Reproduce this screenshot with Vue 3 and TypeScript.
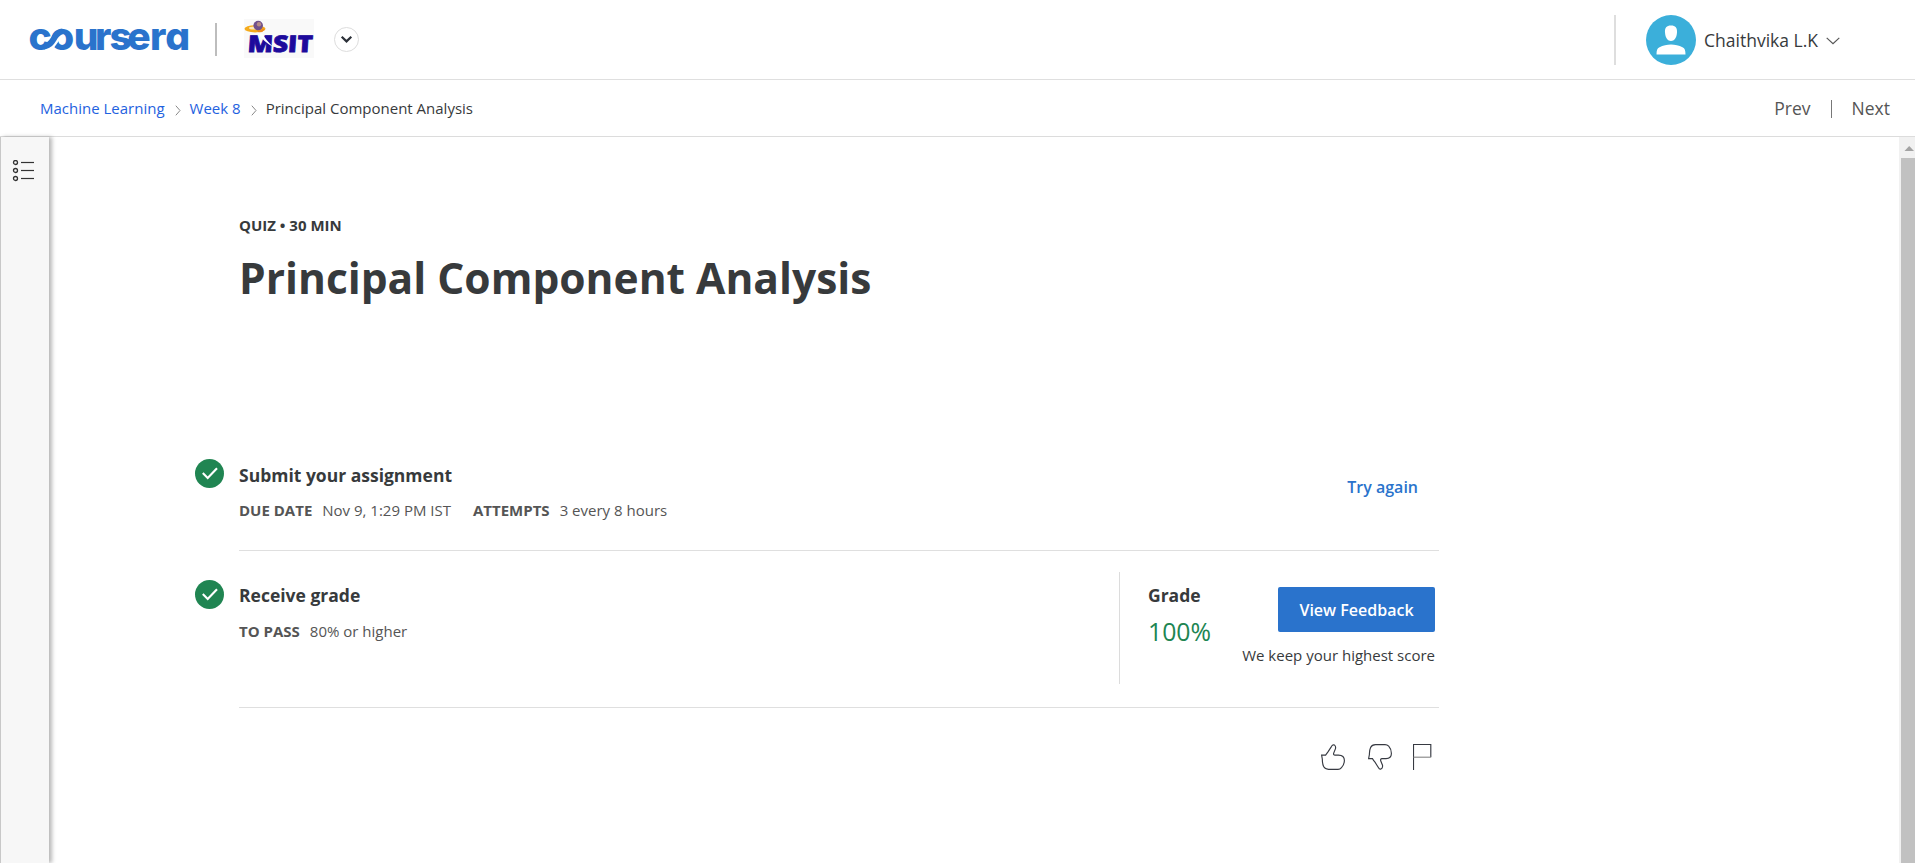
<script setup lang="ts">
interface Fact { label: string; value: string }
interface Crumb { text: string; link: boolean }

const crumbs: Crumb[] = [
  { text: 'Machine Learning', link: true },
  { text: 'Week 8', link: true },
  { text: 'Principal Component Analysis', link: false },
]
const submitFacts: Fact[] = [
  { label: 'DUE DATE', value: 'Nov 9, 1:29 PM IST' },
  { label: 'ATTEMPTS', value: '3 every 8 hours' },
]
const gradeFacts: Fact[] = [{ label: 'TO PASS', value: '80% or higher' }]
</script>

<template>
  <div class="page">
    <header class="header">
      <svg class="brand" width="162" height="30" viewBox="29 24 162 30">
        <text y="49.6" x="28.6 50 73.8 95 109.6 127.3 150 165.2">coursera</text>
        <path d="M50.2 46.8 L58.6 35.4" stroke="#fff" stroke-width="7" fill="none" />
        <path d="M44 46.4 C50 46 52 41.5 54.8 37.2 C57 33.8 59 31.6 62.5 31.4" stroke="#2a73cc" stroke-width="6" fill="none" />
      </svg>
      <span class="brand-line"></span>
      <svg class="partner" width="70" height="39" viewBox="0 0 70 39">
        <rect width="70" height="39" fill="#f9f9f9" />
        <ellipse cx="11" cy="9.8" rx="10.5" ry="3.6" fill="#f5ab1c" />
        <ellipse cx="10" cy="9" rx="5" ry="1.5" fill="#fde9b8" />
        <circle cx="14.2" cy="6.6" r="4.8" fill="#70508c" />
        <circle cx="15" cy="5.2" r="2.2" fill="#b58a86" />
        <path d="M14 12 q4 1 6 -2" stroke="#f08a1c" stroke-width="2" fill="none" />
        <text transform="translate(3.2 33) skewX(-4)" textLength="65" lengthAdjust="spacingAndGlyphs">MSIT</text>
        <path d="M14 14.5 Q19 22 29 28 Q22 21 18 14.5z" fill="#fff" />
      </svg>
      <button class="switcher" aria-label="Switch program">
        <svg width="13" height="9" viewBox="0 0 13 9"><path d="M1.7 1.8 L6.5 6.4 L11.3 1.8" /></svg>
      </button>
      <div class="account">
        <svg class="avatar" width="50" height="50" viewBox="0 0 50 50">
          <circle cx="25" cy="25" r="25" fill="#3bafda" />
          <path d="M25 10.5 C29.5 10.5 31.4 13 31 17.5 C30.6 23 28.3 26 25 26 C21.7 26 19.4 23 19 17.5 C18.6 13 20.5 10.5 25 10.5z" fill="#fff" />
          <path d="M10.5 39.5 C10.6 35.5 11 33.2 13.5 32.2 C17 30.7 21 29.6 25 29.6 S33 30.7 36.5 32.2 C39 33.2 39.4 35.5 39.5 39.5z" fill="#fff" />
        </svg>
        <span class="name">Chaithvika L.K</span>
        <svg class="caret" width="14" height="8" viewBox="0 0 14 8"><path d="M.7 .9 L7 6.7 L13.3 .9" /></svg>
      </div>
    </header>

    <nav class="bar">
      <template v-for="(c, i) in crumbs" :key="c.text">
        <svg v-if="i > 0" class="sep" width="6" height="11" viewBox="0 0 6 11"><path d="M.8 .7 L5 5.5 L.8 10.3" /></svg>
        <a v-if="c.link" class="crumb link">{{ c.text }}</a>
        <span v-else class="crumb">{{ c.text }}</span>
      </template>
      <div class="pager"><span>Prev</span><i></i><span>Next</span></div>
    </nav>

    <div class="body">
      <aside class="rail">
        <svg width="23" height="22" viewBox="0 0 23 22">
          <g v-for="y in [3, 11, 19]" :key="y">
            <circle cx="3.5" :cy="y - 0.5" r="2" />
            <path :d="`M9 ${y - 0.5} H22`" />
          </g>
        </svg>
      </aside>

      <main class="content">
        <p class="kind">QUIZ • 30 MIN</p>
        <h1>Principal Component Analysis</h1>

        <section class="step submit">
          <svg class="tick" width="29" height="29" viewBox="0 0 29 29"><circle cx="14.5" cy="14.5" r="14.5" /><path d="M7.8 14 L12.7 19 L22 9.2" /></svg>
          <div class="info">
            <h2>Submit your assignment</h2>
            <p class="facts"><span v-for="f in submitFacts" :key="f.label"><b>{{ f.label }}</b>{{ f.value }}</span></p>
          </div>
          <a class="again">Try again</a>
        </section>

        <section class="step receive">
          <svg class="tick" width="29" height="29" viewBox="0 0 29 29"><circle cx="14.5" cy="14.5" r="14.5" /><path d="M7.8 14 L12.7 19 L22 9.2" /></svg>
          <div class="info">
            <h2>Receive grade</h2>
            <p class="facts"><span v-for="f in gradeFacts" :key="f.label"><b>{{ f.label }}</b>{{ f.value }}</span></p>
          </div>
          <div class="grade">
            <div class="score"><h2>Grade</h2><strong>100%</strong></div>
            <div class="feedback"><button>View Feedback</button><p>We keep your highest score</p></div>
          </div>
        </section>

        <div class="reactions">
          <svg width="24" height="26" viewBox="0 0 24 26"><path d="M.6 11.1 H4.6 Q5.6 9.6 7 7.9 L10.4 2.6 Q11.7 .1 13.5 1.1 Q15 2.2 14.5 4.6 L12.6 9.3 Q12.3 11 14 11.1 H17.5 Q23.4 11.3 23.4 16.5 Q23.2 21 20.5 23.6 Q19 25.4 17 25.4 H7.5 Q4 25.2 2.6 22.6 Q1.4 20 1.3 15 L.6 11.1z" /></svg>
          <svg width="24" height="26" viewBox="0 0 24 26"><path d="M.6 14.6 H4.4 Q5.4 16.6 7 18.2 L10.2 23.2 Q11.5 25.7 13 25 Q15 24 14.5 21.2 L12.7 16.8 Q12.3 14.6 14 14.6 H18 Q23.4 14.4 23.4 9.5 Q23.3 5 20.7 2.2 Q19.2 .6 17 .6 H7.5 Q4 .7 2.6 3.4 Q1.3 6 1.4 10.5 L.6 14.6z" /></svg>
          <svg width="19" height="26" viewBox="0 0 19 26"><path d="M.5 26 V.5 H17.8 V13.2" /><path class="thin" d="M.5 13.2 H17.8" /></svg>
        </div>
      </main>

      <div class="scroll"><svg width="16" height="21" viewBox="0 0 16 21"><path d="M5.5 14 L10.2 9 L15 14z" /></svg><i></i></div>
    </div>
  </div>
</template>

<style scoped>
.page { width: 1915px; height: 863px; display: flex; flex-direction: column; overflow: hidden; background: #fff; color: #373a3c; font: 15px/24px "Open Sans", sans-serif; }
h1, h2, p { margin: 0; }
button { font-family: inherit; padding: 0; border: 0; }
svg { display: block; flex: none; }
.header { box-sizing: border-box; height: 80px; border-bottom: 1px solid #dfdfdf; display: flex; align-items: center; flex: none; padding-left: 29px; }
.brand text { font: 800 39px Inter, sans-serif; font-feature-settings: "cv11"; fill: #2a73cc; }
.brand { margin-top: -1px; overflow: visible; }
.brand-line { width: 2px; height: 33px; background: #bdbdbd; margin-left: 24px; }
.partner { margin: -2px 0 0 27px; }
.partner text { font: 800 23px "Open Sans", sans-serif; fill: #1d0a9c; stroke: #1d0a9c; stroke-width: .8; }
.switcher { width: 25px; height: 25px; border: 1px solid #ddd; border-radius: 50%; background: #fff; display: grid; place-items: center; margin-left: 20px; }
.switcher path { fill: none; stroke: #2b3038; stroke-width: 2.2; }
.account { margin: 1px 75px 0 auto; padding-left: 30px; height: 50px; border-left: 2px solid #dedede; display: flex; align-items: center; }
.name { font-size: 17.5px; margin: -1px 0 0 8px; }
.caret { margin: 2px 0 0 8px; }
.caret path { fill: none; stroke: #555; stroke-width: 1.2; }
.bar { box-sizing: border-box; height: 57px; border-bottom: 1px solid #dcdcdc; display: flex; align-items: center; flex: none; padding: 0 25px 0 40px; }
.crumb { margin-top: -1px; }
.link { color: #1f62e0; }
.sep { margin: 5px 9px 0 10px; }
.sep path { fill: none; stroke: #888; stroke-width: 1; }
.pager { margin-left: auto; display: flex; align-items: center; font-size: 17.5px; color: #555; margin-top: -1px; }
.pager i { width: 1px; height: 18px; background: #777; margin: 2px 20px 0 20px; }
.body { flex: 1; display: flex; min-height: 0; }
.rail { box-sizing: border-box; width: 49px; border-left: 1px solid #c8c8c8; background: #f7f7f7; box-shadow: 3px 0 4px rgba(0, 0, 0, .28); padding: 23px 0 0 11px; flex: none; }
.rail circle { fill: none; stroke: #333; stroke-width: 1.3; }
.rail path { stroke: #333; stroke-width: 1.2; }
.content { width: 1200px; margin-left: 190px; padding-top: 76px; }
.kind { font-weight: 700; font-size: 15px; }
h1 { font-size: 42.5px; line-height: 58px; font-weight: 700; margin-top: 12px; }
.step { display: flex; box-sizing: border-box; border-bottom: 1px solid #dfdfdf; }
.tick { margin: 0 15.5px 0 -44.5px; }
.tick circle { fill: #208552; }
.tick path { fill: none; stroke: #fff; stroke-width: 2.1; }
h2 { font-size: 17.5px; line-height: 24px; font-weight: 700; }
.info { flex: 1; }
.facts { display: flex; gap: 22px; color: #555; margin-top: 11px; }
.facts b { font-weight: 700; margin-right: 10px; }
.submit { height: 99px; margin-top: 145px; padding-top: 7px; }
.submit h2 { margin-top: 4px; }
.again { color: #2a73cc; font-weight: 600; font-size: 16px; margin: 16px 21px 0 0; }
.receive { height: 157px; padding-top: 21px; }
.receive .tick { margin-top: 8px; }
.receive h2 { margin-top: 11px; }
.receive .facts { margin-top: 12px; }
.grade { border-left: 1px solid #dcdcdc; height: 112px; width: 316px; padding-left: 28px; margin-right: 4px; box-sizing: border-box; display: flex; justify-content: space-between; }
.score strong { display: block; font-weight: 400; font-size: 24.8px; line-height: 34px; margin-top: 7px; color: #208552; }
.feedback { display: flex; flex-direction: column; align-items: flex-end; padding-top: 15px; }
.feedback button { width: 157px; height: 45px; border-radius: 2px; background: #2a73cc; color: #fff; font-weight: 600; font-size: 16px; }
.feedback p { margin-top: 11px; }
.reactions { display: flex; justify-content: flex-end; margin: 36px 7px 0 0; }
.reactions svg { margin-left: 23px; }
.reactions svg:last-child { margin-left: 21px; }
.reactions path { fill: none; stroke: #373a42; stroke-width: 1.15; }
.reactions .thin { stroke: #888; }
.scroll { width: 16px; margin-left: auto; background: #f1f1f1; display: flex; flex-direction: column; }
.scroll path { fill: #a3a3a3; }
.scroll i { flex: 1; margin-left: 2px; background: #c1c1c1; }
</style>
